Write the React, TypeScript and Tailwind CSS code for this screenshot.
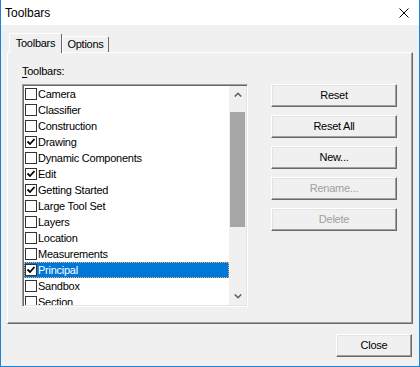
import React from "react";

const items: { label: string; checked: boolean; selected?: boolean }[] = [
  { label: "Camera", checked: false },
  { label: "Classifier", checked: false },
  { label: "Construction", checked: false },
  { label: "Drawing", checked: true },
  { label: "Dynamic Components", checked: false },
  { label: "Edit", checked: true },
  { label: "Getting Started", checked: true },
  { label: "Large Tool Set", checked: false },
  { label: "Layers", checked: false },
  { label: "Location", checked: false },
  { label: "Measurements", checked: false },
  { label: "Principal", checked: true, selected: true },
  { label: "Sandbox", checked: false },
  { label: "Section", checked: false },
];

function Check({ checked }: { checked: boolean }) {
  return (
    <div className="w-[12px] h-[12px] border border-[#333333] bg-white shrink-0 flex items-center justify-center">
      {checked && (
        <svg width="10" height="10" viewBox="0 0 10 10">
          <path d="M1.5 4.5 L4 7 L8.5 2" stroke="#000" strokeWidth="1.8" fill="none" />
        </svg>
      )}
    </div>
  );
}

function Btn({ label, disabled }: { label: string; disabled?: boolean }) {
  return (
    <div
      className={`h-[23px] w-full flex items-center justify-center bg-[#f0f0f0] border-t border-l border-t-white border-l-white border-r border-b border-r-[#696969] border-b-[#696969] shadow-[inset_-1px_-1px_0_#a0a0a0,inset_1px_1px_0_#e3e3e3] ${
        disabled ? "text-[#a0a0a0]" : "text-black"
      }`}
    >
      {label}
    </div>
  );
}

function Chevron({ up }: { up: boolean }) {
  return (
    <svg width="8" height="5" viewBox="0 0 8 5">
      <path
        d={up ? "M0.8 4.5 L4 1.3 L7.2 4.5" : "M0.8 0.5 L4 3.7 L7.2 0.5"}
        stroke="#606060"
        strokeWidth="1.6"
        fill="none"
      />
    </svg>
  );
}

export default function App() {
  return (
    <div className="w-[420px] h-[367px] bg-[#f0f0f0] border-x border-b border-[#1883d7] flex flex-col font-['Liberation_Sans',Arial,sans-serif] text-[11px] tracking-[-0.25px] text-black overflow-hidden">
      {/* Title bar */}
      <div className="h-[25px] shrink-0 bg-white flex items-center justify-between pl-[4px] pr-[10px]">
        <span className="text-[12px] tracking-normal">Toolbars</span>
        <svg width="10" height="10" viewBox="0 0 10 10">
          <path d="M0.5 0.5 L9.5 9.5 M9.5 0.5 L0.5 9.5" stroke="#000" strokeWidth="1" />
        </svg>
      </div>

      <div className="flex-1 flex flex-col px-[6px] pt-[8px]">
        {/* Tabs */}
        <div className="h-[19px] flex items-end pl-[2px]">
          <div className="relative z-10 -mb-px h-[20px] w-[53px] bg-[#f0f0f0] border-t border-l border-white border-r border-r-[#696969] rounded-t-[2px] flex items-center justify-center pb-[1px]">
            Toolbars
          </div>
          <div className="h-[16px] w-[47px] bg-[#f0f0f0] border-t border-l border-white border-r border-r-[#696969] rounded-t-[2px] flex items-center justify-center">
            Options
          </div>
        </div>

        {/* Panel */}
        <div className="h-[272px] border-t border-l border-white border-r border-b border-r-[#696969] border-b-[#696969] shadow-[inset_-1px_-1px_0_#a0a0a0] pl-[14px] pt-[12px] flex flex-col">
          <div className="h-[13px] leading-[13px] mb-[6px]">
            <span className="underline underline-offset-[2px]">T</span>oolbars:
          </div>
          <div className="flex">
            {/* Listbox */}
            <div className="w-[226px] h-[223px] border border-t-[#a0a0a0] border-l-[#a0a0a0] border-r-white border-b-white p-px shadow-[inset_1px_1px_0_#696969,inset_-1px_-1px_0_#e3e3e3]">
              <div className="w-full h-full bg-white flex overflow-hidden">
                <div className="w-[205px] flex flex-col">
                  {items.map((it) => (
                    <div
                      key={it.label}
                      className={`h-[16px] shrink-0 flex items-center ${
                        it.selected
                          ? "bg-[#0078d7] text-white outline outline-1 outline-dotted outline-[#f0b070] -outline-offset-1"
                          : ""
                      }`}
                    >
                      <div className="ml-[1px]">
                        <Check checked={it.checked} />
                      </div>
                      <span className="ml-[1px] leading-[16px] whitespace-nowrap">{it.label}</span>
                    </div>
                  ))}
                </div>
                <div className="w-[17px] bg-[#f0f0f0] flex flex-col">
                  <div className="h-[17px] flex items-center justify-center">
                    <Chevron up />
                  </div>
                  <div className="flex-1">
                    <div className="mt-[9px] h-[115px] mx-[1px] bg-[#a6a6a6]" />
                  </div>
                  <div className="h-[17px] flex items-center justify-center">
                    <Chevron up={false} />
                  </div>
                </div>
              </div>
            </div>

            {/* Buttons */}
            <div className="ml-[23px] w-[126px] flex flex-col gap-[8px]">
              <Btn label="Reset" />
              <Btn label="Reset All" />
              <Btn label="New..." />
              <Btn label="Rename..." disabled />
              <Btn label="Delete" disabled />
            </div>
          </div>
        </div>

        {/* Footer */}
        <div className="flex justify-end pt-[10px] pr-[1px]">
          <div className="w-[76px]">
            <Btn label="Close" />
          </div>
        </div>
      </div>
    </div>
  );
}
